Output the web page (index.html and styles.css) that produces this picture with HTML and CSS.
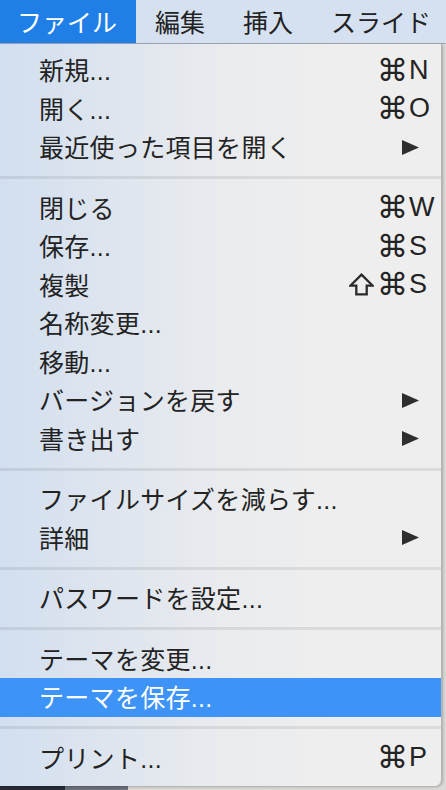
FILE: index.html
```html
<!DOCTYPE html>
<html lang="ja">
<head>
    <meta charset="UTF-8">
    <meta name="viewport" content="width=device-width, initial-scale=1.0">
    <title>ファイル メニュー</title>
    <link rel="stylesheet" href="styles.css">
</head>
<body>
    <!-- Menu bar -->
    <header class="menubar">
        <span class="menubar-item active">ファイル</span>
        <span class="menubar-item">編集</span>
        <span class="menubar-item">挿入</span>
        <span class="menubar-item">スライド</span>
    </header>

    <!-- File menu -->
    <div class="menu">
        <div class="item"><span class="label">新規...</span><span class="keys"><span class="mods">⌘</span><span class="key">N</span></span></div>
        <div class="item"><span class="label">開く...</span><span class="keys"><span class="mods">⌘</span><span class="key">O</span></span></div>
        <div class="item"><span class="label">最近使った項目を開く</span><span class="keys sub"><svg class="arrow" viewBox="0 0 17 15"><polygon points="0,0 17,7.5 0,15"/></svg></span></div>
        <div class="sep"></div>

        <div class="item"><span class="label">閉じる</span><span class="keys"><span class="mods">⌘</span><span class="key">W</span></span></div>
        <div class="item"><span class="label">保存...</span><span class="keys"><span class="mods">⌘</span><span class="key">S</span></span></div>
        <div class="item"><span class="label">複製</span><span class="keys"><span class="mods"><svg class="shift" viewBox="0 0 24 22"><path d="M12 1.5 L22.5 12 H17 V20.5 H7 V12 H1.5 Z"/></svg>⌘</span><span class="key">S</span></span></div>
        <div class="item"><span class="label">名称変更...</span></div>
        <div class="item"><span class="label">移動...</span></div>
        <div class="item"><span class="label">バージョンを戻す</span><span class="keys sub"><svg class="arrow" viewBox="0 0 17 15"><polygon points="0,0 17,7.5 0,15"/></svg></span></div>
        <div class="item"><span class="label">書き出す</span><span class="keys sub"><svg class="arrow" viewBox="0 0 17 15"><polygon points="0,0 17,7.5 0,15"/></svg></span></div>
        <div class="sep"></div>

        <div class="item"><span class="label">ファイルサイズを減らす...</span></div>
        <div class="item"><span class="label">詳細</span><span class="keys sub"><svg class="arrow" viewBox="0 0 17 15"><polygon points="0,0 17,7.5 0,15"/></svg></span></div>
        <div class="sep"></div>

        <div class="item"><span class="label">パスワードを設定...</span></div>
        <div class="sep"></div>

        <div class="item"><span class="label">テーマを変更...</span></div>
        <div class="item selected"><span class="label">テーマを保存...</span></div>
        <div class="sep"></div>

        <div class="item"><span class="label">プリント...</span><span class="keys"><span class="mods">⌘</span><span class="key">P</span></span></div>
    </div>
</body>
</html>
```

FILE: styles.css
```css
* {
    margin: 0;
    padding: 0;
    box-sizing: border-box;
}

body {
    width: 446px;
    height: 790px;
    overflow: hidden;
    font-family: "Liberation Sans", "Noto Sans CJK JP", sans-serif;
    color: #232323;
    background: linear-gradient(to right, #282c37 65px, #6d717a 65px, #6d717a 128px, #dddbd7 128px);
}

/* Menu bar */
.menubar {
    display: flex;
    height: 44px;
    background: #d5e1f0;
    border-bottom: 1px solid #9ea7b4;
    font-size: 25px;
    white-space: nowrap;
}
.menubar-item {
    display: flex;
    align-items: center;
    flex-shrink: 0;
    padding: 0 19px 2px;
    color: #222;
}
.menubar-item.active {
    padding-left: 17px;
    background: #1f7fe7;
    color: white;
}

/* Dropdown */
.menu {
    width: 442px;
    height: 742px;
    padding: 7px 0 9px;
    background: linear-gradient(to right, #d2dff0 0%, #dee5ee 25%, #e9ebee 50%, #eeeeee 75%, #eeeeee 100%);
    border-right: 1px solid #b5b5b5;
    border-bottom-right-radius: 7px;
    box-shadow: 1px 1px 3px rgba(0, 0, 0, 0.25);
    font-size: 25px;
}
.item {
    display: flex;
    align-items: center;
    height: 38.5px;
    padding-left: 39px;
}
.item .label {
    flex: 1;
    white-space: nowrap;
    padding-bottom: 2px;
    letter-spacing: 0.3px;
}
.item.selected {
    background: #3e93f6;
    color: white;
}
.keys {
    display: grid;
    grid-template-columns: 70px 32px;
    width: 102px;
    flex-shrink: 0;
    align-items: center;
}
.mods {
    display: flex;
    align-items: center;
    justify-content: flex-end;
    gap: 3px;
    font-family: "DejaVu Sans", sans-serif;
    font-size: 31px;
    line-height: 1;
    padding-right: 1px;
}
.shift {
    width: 25px;
    height: 23px;
    fill: none;
    stroke: #2a2a2a;
    stroke-width: 2.2;
    stroke-linejoin: miter;
}
.key {
    font-family: "Liberation Sans", sans-serif;
    font-size: 27px;
}
.keys.sub {
    display: flex;
    justify-content: flex-end;
    padding-right: 22px;
}
.arrow {
    width: 17px;
    height: 15px;
    fill: #2e2e2e;
}
.sep {
    height: 22px;
    display: flex;
    align-items: center;
}
.sep::before {
    content: "";
    display: block;
    width: 100%;
    height: 3px;
    background: rgba(0, 0, 0, 0.08);
}
```
